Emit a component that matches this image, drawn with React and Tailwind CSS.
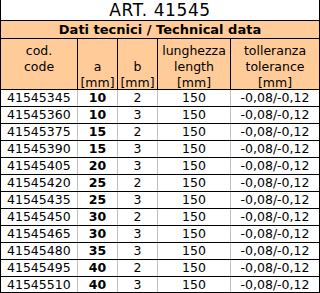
const rows = [
  ["41545345", "10", "2"],
  ["41545360", "10", "3"],
  ["41545375", "15", "2"],
  ["41545390", "15", "3"],
  ["41545405", "20", "3"],
  ["41545420", "25", "2"],
  ["41545435", "25", "3"],
  ["41545450", "30", "2"],
  ["41545465", "30", "3"],
  ["41545480", "35", "3"],
  ["41545495", "40", "2"],
  ["41545510", "40", "3"],
];

function HeaderCell({ lines, className }) {
  return (
    <div
      className={`flex flex-col justify-end items-center border-r border-black leading-[16px] ${className}`}
    >
      {lines.map((l, i) => (
        <span key={i} className="h-[16px] pt-[2px]">{l}</span>
      ))}
    </div>
  );
}

export default function App() {
  return (
    <div
      className="w-[320px] h-[293px] bg-white text-black border-l border-r border-b border-black text-[12.5px] overflow-hidden"
      style={{ fontFamily: '"DejaVu Sans", Verdana, sans-serif' }}
    >
      {/* title */}
      <div className="h-[21px] border-b border-black flex items-center justify-center text-[17px] tracking-[0.6px] leading-none">
        ART. 41545
      </div>

      <div className="h-[18px] border-b border-black bg-[#ffcc99] flex items-center justify-center font-bold text-[13px] leading-none">
        Dati tecnici / Technical data
      </div>

      {/* column headers */}
      <div className="h-[51px] border-b border-black bg-[#ffcc99] flex">
        <HeaderCell className="w-[77px] pb-[16px]" lines={["cod.", "code"]} />
        <HeaderCell className="w-[40px]" lines={["a", "[mm]"]} />
        <HeaderCell className="w-[40px]" lines={["b", "[mm]"]} />
        <HeaderCell className="w-[73px]" lines={["lunghezza", "length", "[mm]"]} />
        <HeaderCell className="flex-1 border-r-0" lines={["tolleranza", "tolerance", "[mm]"]} />
      </div>

      {/* data */}
      {rows.map(([code, a, b]) => (
        <div key={code} className="h-[17px] flex border-b border-black last:border-b-0 leading-none">
          <div className="w-[77px] border-r border-[#c0c0c0] flex items-center pl-[6px]">{code}</div>
          <div className="w-[40px] border-r border-[#c0c0c0] flex items-center justify-center font-bold">{a}</div>
          <div className="w-[40px] border-r border-[#c0c0c0] flex items-center justify-center">{b}</div>
          <div className="w-[73px] border-r border-[#c0c0c0] flex items-center justify-center">150</div>
          <div className="flex-1 flex items-center justify-center">-0,08/-0,12</div>
        </div>
      ))}
    </div>
  );
}
